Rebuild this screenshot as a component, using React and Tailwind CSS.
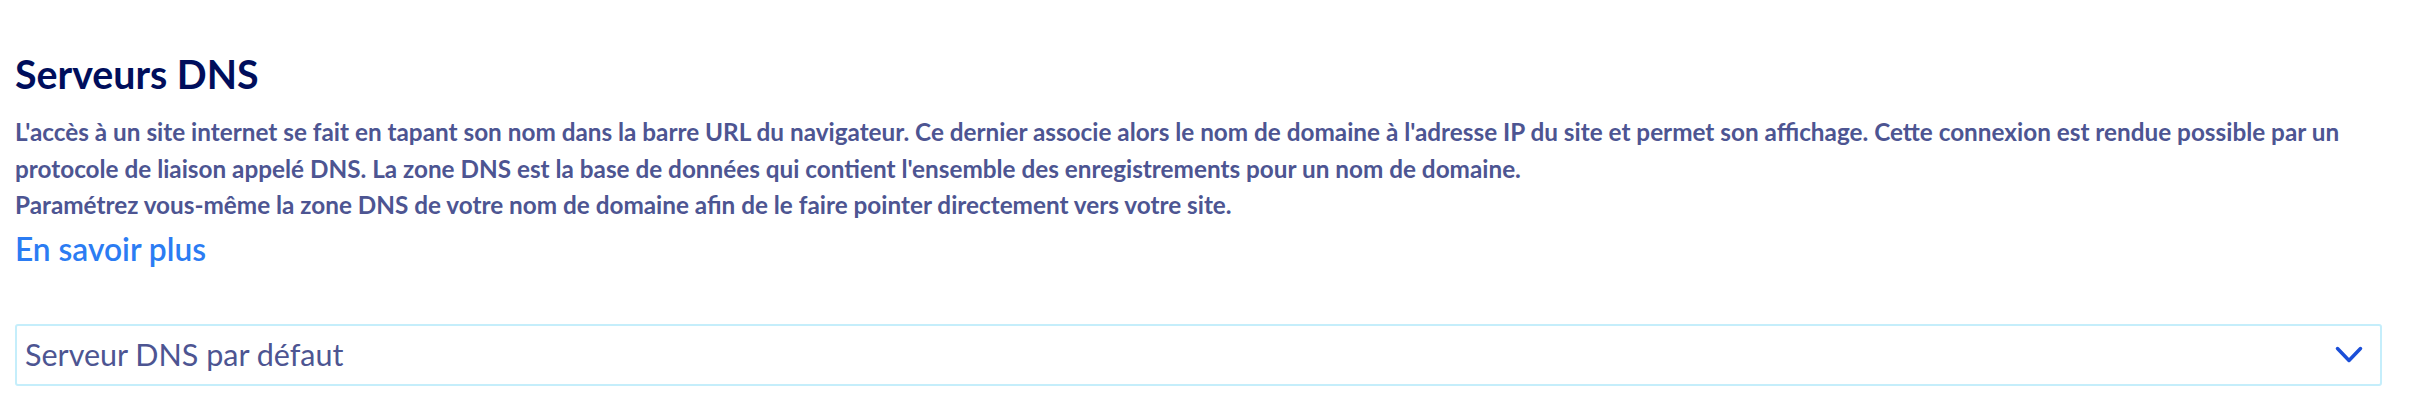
const DnsSection = () => {
  return (
    <div className="bg-white min-h-[418px] pl-[15px] pr-[30px] pt-[52px] font-['Lato',sans-serif]">
      {/* Title */}
      <h2 className="text-[39.3px] leading-[44px] font-bold text-[#000e5c]">
        Serveurs DNS
      </h2>

      {/* Description */}
      <div className="mt-[18px] text-[24.3px] leading-[36.5px] font-bold text-[#4d5592]">
        <p>
          L'accès à un site internet se fait en tapant son nom dans la barre URL du navigateur. Ce dernier associe alors le nom de domaine à l'adresse IP du site et permet son affichage. Cette connexion est rendue possible par un protocole de liaison appelé DNS. La zone DNS est la base de données qui contient l'ensemble des enregistrements pour un nom de domaine.
        </p>
        <p>
          Paramétrez vous-même la zone DNS de votre nom de domaine afin de le faire pointer directement vers votre site.
        </p>
      </div>

      {/* Link */}
      <a
        href="#"
        className="inline-block mt-[7px] text-[31.7px] leading-[36px] font-semibold text-[#2b7cf3]"
      >
        En savoir plus
      </a>

      {/* Select */}
      <button className="mt-[57px] w-full h-[62px] flex items-center justify-between border-2 border-[#c5eefb] rounded-[3px] pl-[8px] pr-[17px] text-left">
        <span className="text-[30.5px] text-[#4d5592]">
          Serveur DNS par défaut
        </span>
        <svg
          width="28"
          height="18"
          viewBox="0 0 28 18"
          fill="none"
          stroke="#1b4fd8"
          strokeWidth="3.5"
          strokeLinecap="round"
          strokeLinejoin="round"
        >
          <polyline points="2.5,2.5 14,14.5 25.5,2.5" />
        </svg>
      </button>
    </div>
  );
};

export default function App() {
  return <DnsSection />;
}
